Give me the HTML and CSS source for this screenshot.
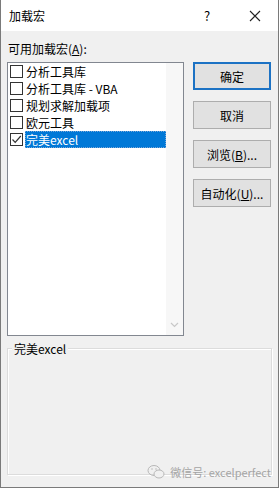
FILE: index.html
```html
<!DOCTYPE html>
<html lang="zh">
<head>
<meta charset="utf-8">
<title>加载宏</title>
<link rel="stylesheet" href="styles.css">
</head>
<body>
<div class="window">
  <div class="titlebar">
    <span class="title">加载宏</span>
    <span class="help">?</span>
    <span class="close">
      <svg width="12" height="12" viewBox="0 0 12 12"><path d="M1 1 L11 11 M11 1 L1 11" stroke="#222" stroke-width="1.1" fill="none"/></svg>
    </span>
  </div>
  <div class="body">
    <div class="main">
      <div class="left">
        <div class="label">可用加载宏(<u>A</u>):</div>
        <div class="listbox">
          <div class="items">
            <div class="item"><span class="cb"></span><span class="txt">分析工具库</span></div>
            <div class="item"><span class="cb"></span><span class="txt">分析工具库 - VBA</span></div>
            <div class="item"><span class="cb"></span><span class="txt">规划求解加载项</span></div>
            <div class="item"><span class="cb"></span><span class="txt">欧元工具</span></div>
            <div class="item sel"><span class="cb checked"><svg width="11" height="11" viewBox="0 0 11 11"><path d="M1.5 5.5 L4.2 8.3 L9.8 2" stroke="#333" stroke-width="1.2" fill="none"/></svg></span><span class="txt">完美excel</span></div>
          </div>
          <div class="scroll">
            <svg class="chev" width="9" height="6" viewBox="0 0 9 6"><path d="M1 1 L4.5 4.5 L8 1" stroke="#c8c8c8" stroke-width="1.2" fill="none"/></svg>
          </div>
        </div>
      </div>
      <div class="buttons">
        <button class="btn default">确定</button>
        <button class="btn">取消</button>
        <button class="btn">浏览(<u>B</u>)...</button>
        <button class="btn">自动化(<u>U</u>)...</button>
      </div>
    </div>
    <div class="group">
      <span class="legend">完美excel</span>
    </div>
    <div class="watermark">
      <svg width="18" height="16" viewBox="0 0 18 16"><ellipse cx="7" cy="6.5" rx="6" ry="5" fill="none" stroke="#b8b8b8" stroke-width="1"/><ellipse cx="12" cy="10" rx="5" ry="4" fill="#f0f0f0" stroke="#b8b8b8" stroke-width="1"/><circle cx="5" cy="5" r="0.8" fill="#b8b8b8"/><circle cx="9" cy="5" r="0.8" fill="#b8b8b8"/></svg>
      <span>微信号: excelperfect</span>
    </div>
  </div>
</div>
</body>
</html>
```

FILE: styles.css
```css
* { box-sizing: border-box; }
html, body { margin: 0; padding: 0; }
body {
  width: 279px;
  height: 488px;
  overflow: hidden;
  font-family: "Noto Sans CJK SC", "Noto Sans", sans-serif;
  font-size: 12px;
  color: #000;
  background: #f0f0f0;
}
.window {
  width: 279px;
  height: 488px;
  border: 1px solid #7a7a7a;
  border-top: none;
  background: #f0f0f0;
  display: flex;
  flex-direction: column;
}
.titlebar {
  height: 31px;
  background: #fff;
  display: flex;
  align-items: center;
  padding-left: 8px;
  flex: none;
}
.title { flex: 1; font-size: 12px; }
.help { width: 20px; text-align: center; font-size: 13px; margin-right: 28px; }
.close { width: 20px; display: flex; justify-content: center; margin-right: 13px; }
.body {
  position: relative;
  flex: 1;
  padding: 9px 6px 0 6px;
}
.main { display: flex; gap: 9px; }
.left { display: flex; flex-direction: column; }
.label { height: 17px; line-height: 17px; padding-left: 1px; margin-bottom: 5px; }
.label u, .btn u { text-decoration: underline; text-underline-offset: 1px; }
.listbox {
  width: 177px;
  height: 274px;
  border: 1px solid #828790;
  background: #fff;
  display: flex;
}
.items { flex: 1; }
.item {
  height: 17px;
  display: flex;
  align-items: center;
  padding-left: 2px;
}
.cb {
  width: 13px;
  height: 13px;
  border: 1px solid #333;
  background: #fff;
  margin-right: 2px;
  display: flex;
  align-items: center;
  justify-content: center;
  flex: none;
}
.txt { line-height: 17px; padding: 0 1px; }
.item.sel .txt {
  background: #0078d7;
  color: #fff;
  flex: 1;
  outline: 1px dotted #7aa7d8;
  outline-offset: -1px;
}
.scroll {
  width: 17px;
  background: #f7f7f7;
  display: flex;
  align-items: flex-end;
  justify-content: center;
  padding-bottom: 7px;
}
.buttons {
  display: flex;
  flex-direction: column;
  gap: 11px;
  padding-top: 22px;
}
.btn {
  width: 78px;
  height: 28px;
  background: #e1e1e1;
  border: 1px solid #adadad;
  font-family: inherit;
  font-size: 12px;
  color: #000;
  padding: 0;
  margin: 0;
}
.btn.default { border: 2px solid #1c72c4; }
.group {
  position: relative;
  margin-top: 12px;
  width: 265px;
  height: 127px;
  border: 1px solid #dcdcdc;
  box-shadow: inset 1px 1px 0 #fff, 1px 1px 0 #fff;
}
.legend {
  position: absolute;
  top: -9px;
  left: 4px;
  background: #f0f0f0;
  padding: 0 2px;
  line-height: 17px;
}
.watermark {
  position: absolute;
  right: 7px;
  bottom: 7px;
  display: flex;
  align-items: center;
  gap: 5px;
  color: #a4a4a4;
  font-size: 11px;
}
```
